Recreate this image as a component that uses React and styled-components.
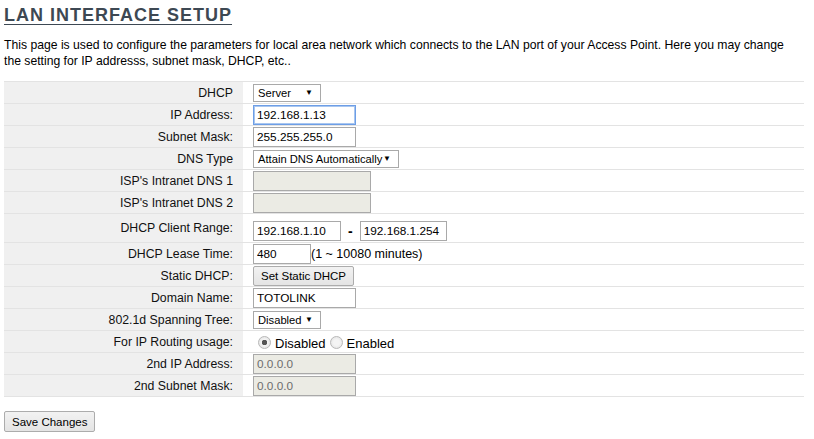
import React from 'react';
import styled, { createGlobalStyle } from 'styled-components';

const Global = createGlobalStyle`
  body {
    margin: 0;
    background: #fff;
    font-family: "Liberation Sans", Arial, sans-serif;
    color: #000;
  }
`;

const Page = styled.div`
  padding: 2px 10px 0 4px;
`;

const Heading = styled.h1`
  margin: 2px 0 0 0;
  font-size: 18px;
  font-weight: bold;
  letter-spacing: 1px;
  color: #3d4853;
  text-decoration: underline;
  text-underline-offset: 3px;
  line-height: 22px;
`;

const Intro = styled.p`
  margin: 11px 0 0 0;
  font-size: 12.2px;
  line-height: 16px;
  width: 785px;
`;

const Table = styled.table`
  margin-top: 12px;
  width: 800px;
  border-collapse: collapse;
  font-size: 12px;
`;

const Row = styled.tr`
  height: ${p => p.$h || 22}px;
  border-top: 1px solid #e3e3e3;
  border-bottom: 1px solid #e3e3e3;
`;

const Label = styled.td`
  width: 229px;
  background: #f0f0f0;
  text-align: right;
  padding: 0 10px 0 0;
  font-size: 12.3px;
  color: #111;
`;

const Value = styled.td`
  padding: 0 0 0 10px;
  font-size: 12.5px;
`;

const Cell = styled.div`
  display: flex;
  align-items: center;
  padding-top: ${p => p.$pt || 0}px;
`;

const TextInput = styled.input`
  box-sizing: border-box;
  width: ${p => p.$w || 103}px;
  height: 20px;
  margin: 0;
  padding: 0 3px;
  font-family: "Liberation Sans", Arial, sans-serif;
  font-size: 11.8px;
  color: #000;
  background: ${p => (p.disabled ? '#ebebe4' : '#fff')};
  border: 1px solid ${p => (p.$focus ? '#6d9ee6' : '#a9a9a9')};
  box-shadow: ${p => (p.$focus ? 'inset 0 0 0 1px #a8c6f0' : 'none')};
  outline: none;
  &:disabled { color: #6d6d6d; }
`;

const Select = styled.div`
  box-sizing: border-box;
  width: ${p => p.$w}px;
  height: 18px;
  display: flex;
  align-items: center;
  justify-content: space-between;
  padding: 0 7px 0 4px;
  border: 1px solid #a9a9a9;
  background: #fff;
  font-size: 11.2px;
  white-space: nowrap;
  color: #000;
`;

const Arrow = styled.span`
  font-size: 8px;
  line-height: 1;
`;

const Dash = styled.span`
  font-weight: bold;
  font-size: 14px;
  margin: 0 7px;
`;

const Btn = styled.button`
  box-sizing: border-box;
  height: ${p => p.$h || 20}px;
  padding: 0 7px;
  font-family: "Liberation Sans", Arial, sans-serif;
  font-size: 11.5px;
  color: #000;
  border: 1px solid #acacac;
  border-radius: 2px;
  background: linear-gradient(#f2f2f2, #e4e4e4);
`;

const Radio = styled.span`
  box-sizing: border-box;
  width: 13px;
  height: 13px;
  border-radius: 50%;
  border: 1px solid #b9b9b9;
  background: radial-gradient(circle, ${p => (p.$on ? '#555 0 2.5px,' : '')} #f4f4f4 3px, #dcdcdc 100%);
  margin: 0 4px 0 ${p => p.$ml || 0}px;
`;

const RadioLabel = styled.span`
  font-size: 13px;
  margin-right: 1px;
  padding-top: 2px;
`;

const Footer = styled.div`
  display: flex;
  margin-top: 14px;
`;

const DropDown = ({ w, children }) => (
  <Select $w={w}>
    <span>{children}</span>
    <Arrow>▼</Arrow>
  </Select>
);

export default function App() {
  return (
    <Page>
      <Global />
      <Heading>LAN INTERFACE SETUP</Heading>
      <Intro>
        This page is used to configure the parameters for local area network which connects to the LAN port of your Access Point. Here you may change
        the setting for IP addresss, subnet mask, DHCP, etc..
      </Intro>
      <Table>
        <tbody>
          <Row>
            <Label>DHCP</Label>
            <Value><DropDown w={68}>Server</DropDown></Value>
          </Row>
          <Row>
            <Label>IP Address:</Label>
            <Value><TextInput $focus defaultValue="192.168.1.13" /></Value>
          </Row>
          <Row>
            <Label>Subnet Mask:</Label>
            <Value><TextInput defaultValue="255.255.255.0" /></Value>
          </Row>
          <Row>
            <Label>DNS Type</Label>
            <Value><DropDown w={146}>Attain DNS Automatically</DropDown></Value>
          </Row>
          <Row>
            <Label>ISP's Intranet DNS 1</Label>
            <Value><TextInput $w={118} disabled /></Value>
          </Row>
          <Row>
            <Label>ISP's Intranet DNS 2</Label>
            <Value><TextInput $w={118} disabled /></Value>
          </Row>
          <Row $h={29}>
            <Label>DHCP Client Range:</Label>
            <Value>
              <Cell $pt={6}>
                <TextInput $w={88} defaultValue="192.168.1.10" />
                <Dash>-</Dash>
                <TextInput $w={87} defaultValue="192.168.1.254" />
              </Cell>
            </Value>
          </Row>
          <Row>
            <Label>DHCP Lease Time:</Label>
            <Value>
              <Cell>
                <TextInput $w={58} defaultValue="480" />
                <span>(1 ~ 10080 minutes)</span>
              </Cell>
            </Value>
          </Row>
          <Row $h={22}>
            <Label>Static DHCP:</Label>
            <Value><Btn>Set Static DHCP</Btn></Value>
          </Row>
          <Row>
            <Label>Domain Name:</Label>
            <Value><TextInput defaultValue="TOTOLINK" /></Value>
          </Row>
          <Row>
            <Label>802.1d Spanning Tree:</Label>
            <Value><DropDown w={68}>Disabled</DropDown></Value>
          </Row>
          <Row>
            <Label>For IP Routing usage:</Label>
            <Value>
              <Cell $pt={2}>
                <Radio $on $ml={5} />
                <RadioLabel>Disabled</RadioLabel>
                <Radio $ml={3} />
                <RadioLabel>Enabled</RadioLabel>
              </Cell>
            </Value>
          </Row>
          <Row>
            <Label>2nd IP Address:</Label>
            <Value><TextInput disabled defaultValue="0.0.0.0" /></Value>
          </Row>
          <Row>
            <Label>2nd Subnet Mask:</Label>
            <Value><TextInput disabled defaultValue="0.0.0.0" /></Value>
          </Row>
        </tbody>
      </Table>
      <Footer>
        <Btn $h={21}>Save Changes</Btn>
      </Footer>
    </Page>
  );
}
